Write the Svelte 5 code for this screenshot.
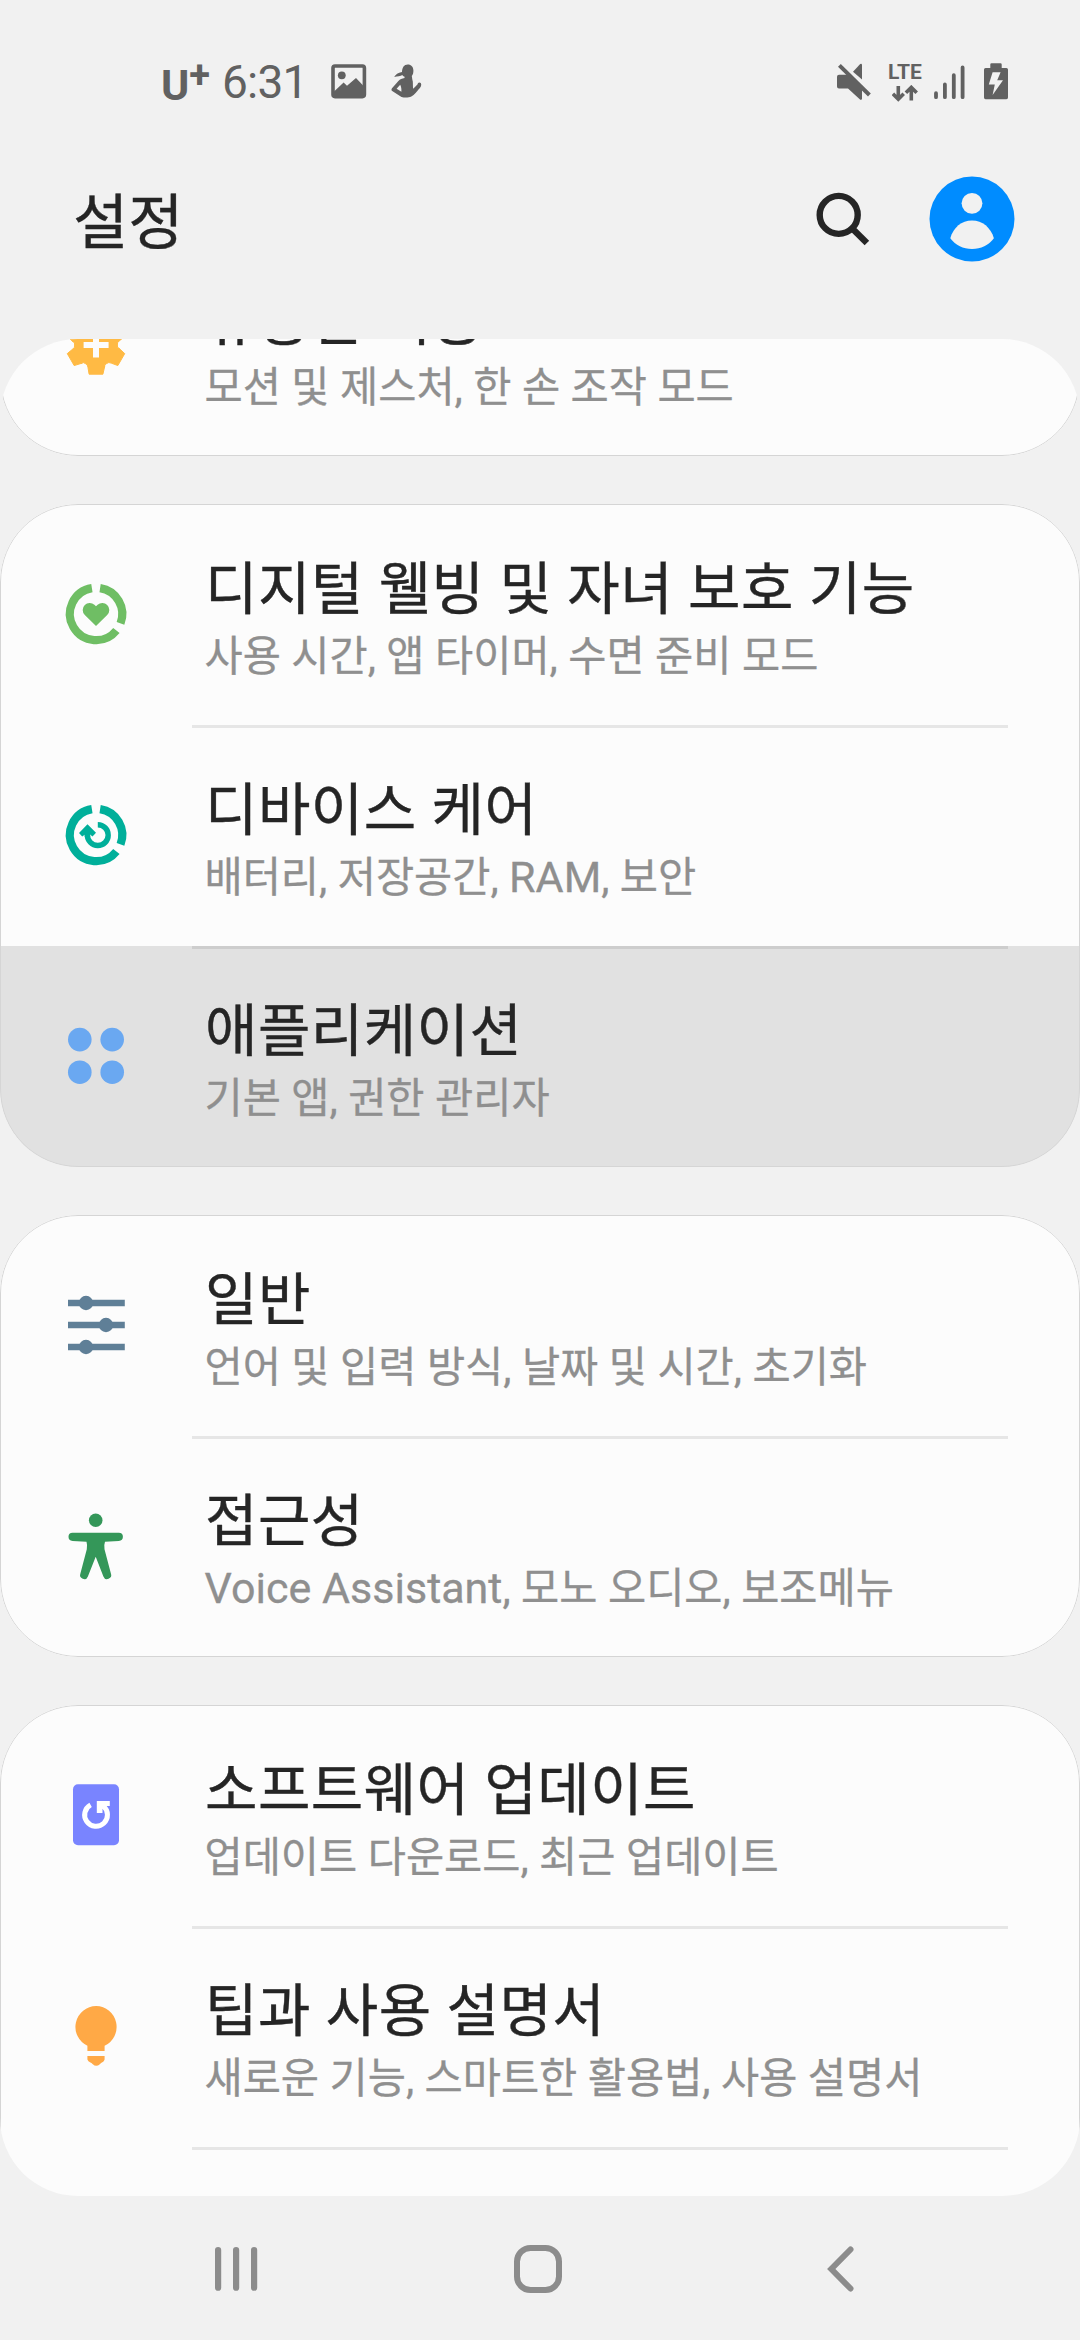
<script lang="ts">
	type Item = { icon: string; title: string; sub: string; pressed?: boolean };

	const groups: Item[][] = [
		[{ icon: 'gear', title: '유용한 기능', sub: '모션 및 제스처, 한 손 조작 모드' }],
		[
			{ icon: 'wellbeing', title: '디지털 웰빙 및 자녀 보호 기능', sub: '사용 시간, 앱 타이머, 수면 준비 모드' },
			{ icon: 'care', title: '디바이스 케어', sub: '배터리, 저장공간, RAM, 보안' },
			{ icon: 'apps', title: '애플리케이션', sub: '기본 앱, 권한 관리자', pressed: true }
		],
		[
			{ icon: 'general', title: '일반', sub: '언어 및 입력 방식, 날짜 및 시간, 초기화' },
			{ icon: 'access', title: '접근성', sub: 'Voice Assistant, 모노 오디오, 보조메뉴' }
		],
		[
			{ icon: 'update', title: '소프트웨어 업데이트', sub: '업데이트 다운로드, 최근 업데이트' },
			{ icon: 'tips', title: '팁과 사용 설명서', sub: '새로운 기능, 스마트한 활용법, 사용 설명서' },
			{ icon: '', title: '', sub: '' }
		]
	];

	// latin runs are set slightly larger than hangul
	const runs = (text: string) => text.split(/([A-Za-z]+(?: [A-Za-z]+)*)/).filter(Boolean);

	function polar(deg: number, r: number) {
		const a = (deg * Math.PI) / 180;
		return `${(36 + r * Math.cos(a)).toFixed(2)} ${(36 + r * Math.sin(a)).toFixed(2)}`;
	}

	// six teeth, slightly rounded valleys
	function gearPath() {
		let d = '';
		for (let i = 0; i < 6; i++) {
			const c = 90 + i * 60;
			d += `${i ? 'L' : 'M'}${polar(c - 23, 22.6)}L${polar(c - 13.3, 30)}L${polar(c + 13.3, 30)}L${polar(c + 20, 23.6)}Q${polar(c + 23, 21)} ${polar(c + 30, 21.4)}Q${polar(c + 37, 21)} ${polar(c + 40, 23.6)}`;
		}
		return d + 'Z';
	}
</script>

{#snippet itemIcon(name: string)}
	<svg class="item-icon" width="72" height="72" viewBox="0 0 72 72" fill="none">
		{#if name === 'gear'}
			<path d={gearPath()} fill="#ffba44" stroke="#ffba44" stroke-width="1" stroke-linejoin="round" />
			<path d="M36 23.4v25.2M23.6 36h25" stroke="#fcfcfc" stroke-width="6" />
		{:else if name === 'wellbeing'}
			<path d="M40.1 10.1A26.2 26.2 0 0 1 60.5 45.4M56.4 52.5A26.2 26.2 0 1 1 31.9 10.1" stroke="#6fbe64" stroke-width="8.2" />
			<path d="M36 48 24.8 37a7 7 0 0 1 0-10 6.9 6.9 0 0 1 9.6-.2L36 28.2l1.6-1.4a6.9 6.9 0 0 1 9.6.2 7 7 0 0 1 0 10Z" fill="#6fbe64" />
		{:else if name === 'care'}
			<path d="M40.1 10.1A26.2 26.2 0 0 1 60.5 45.4M56.4 52.5A26.2 26.2 0 1 1 31.9 10.1" stroke="#00af9a" stroke-width="8.2" />
			<path d="M37.8 25.7A10.4 10.4 0 1 1 27.4 36" stroke="#00af9a" stroke-width="5.4" />
			<path d="M27.5 25.3 19 34l3.2 3.6 2.5-1.8V38h5.4v-2.4l2.4 1.8 3.5-3.6Z" fill="#00af9a" />
		{:else if name === 'apps'}
			<g fill="#6aa8f1">
				<circle cx="19.8" cy="19.6" r="11.8" />
				<circle cx="52.2" cy="19.6" r="11.8" />
				<circle cx="19.8" cy="52.2" r="11.8" />
				<circle cx="52.2" cy="52.2" r="11.8" />
			</g>
		{:else if name === 'general'}
			<path d="M8 14h56.8M8 36h56.8M8 58h56.8" stroke="#5f7f97" stroke-width="6.4" />
			<g fill="#5f7f97">
				<circle cx="26" cy="14" r="7.2" />
				<circle cx="46" cy="36" r="7.2" />
				<circle cx="26" cy="58" r="7.2" />
			</g>
		{:else if name === 'access'}
			<circle cx="35.7" cy="10.3" r="6.8" fill="#349759" />
			<path d="M12.6 22.7H58.8a4.1 4.1 0 0 1 0 8.2L45 31.8q-1.2 3.2-.5 7.4L50.9 63.6a4 4 0 0 1-7.5 2.8L35.7 46.7 27.9 66.4a4 4 0 0 1-7.5-2.8L26.8 39.2q.7-4.2-.3-7.4L12.6 30.9a4.1 4.1 0 0 1 0-8.2Z" fill="#349759" />
		{:else if name === 'update'}
			<rect x="13" y="5.3" width="46" height="61" rx="5" fill="#7984ff" />
			<path d="M30.6 25.9A11.4 11.4 0 1 0 43.4 27.2" stroke="#fff" stroke-width="5" />
			<path d="M36.8 22h13v5H46l-3.5 3v4h-5.7Z" fill="#fff" />
		{:else if name === 'tips'}
			<path d="M36.2 6a20.9 20.9 0 0 1 8.4 39.8V51H27.4v-5.2A20.9 20.9 0 0 1 36.2 6ZM27.4 56h17.2v3.6q-.4 2.2-2.6 2.8-.8.2-2.2 1.8-3.6 3-7 0-1.4-1.6-2.4-1.8-2.4-.6-3-2.8Z" fill="#ffa946" />
		{/if}
	</svg>
{/snippet}

<div class="screen">
	<div class="status">
		<div class="carrier"><span>U</span><span class="plus">+</span></div>
		<span class="clock">6:31</span>
		<svg class="gallery" width="36" height="38" viewBox="0 0 36 38" fill="#616161">
			<rect x="2" y="3" width="31.4" height="30.6" rx="2" fill="none" stroke="#616161" stroke-width="3.6" />
			<circle cx="10.8" cy="12.3" r="3.9" />
			<path d="M2 29.5 12.6 19.4l3.4 3.4 9-7.8 9 9.4V34H2Z" />
		</svg>
		<svg width="32" height="38" viewBox="0 0 32 38" fill="#616161">
			<path d="M16.8 1.6c3.4 0 5.6 2.5 5.6 6 0 2.2-.3 4-1.6 5.4.3 1.4.3 3 1 5.6.2 2.4 0 5.3.4 7.1 1.6-1.4 3-2.8 4.4-4.4.2-1.2.8-1.9 1.6-1.9 1.6 0 2.4 1.2 1.9 3-.2 1.4-1 2.4-2.2 3.6-2 2.8-4.3 5.6-7.6 7.6-2.8 1.3-7 1.2-9.8.4L1.2 28c-1-.8-.9-1.6-.2-2.8L7.4 18c1.8-2 3.4-2.3 6.2-3l-.2-1.6c-1 .2-1.7-.6-2-1.3-2 1-5 1.4-8.2 2 1.6-2.4 3.6-4.4 7.8-5 .2-4.4 2-7.5 5.8-7.5ZM9.2 21.8l-3.6 4 4.8 3c.2-2.6-.2-4.9-1.2-7Z" />
		</svg>

		<div class="status-right">
			<svg width="35" height="38" viewBox="0 0 35 38" fill="#616161">
				<path d="M16 8.8 23.2 1q1.6-1 1.8 1v14.6Z" />
				<path d="M2 11.8h9.6L25 25.4v10.4q-.4 1.8-2 .8L11 25.4H2q-2-.2-2-2v-9.6q0-1.8 2-2Z" />
				<path d="M2.4 2.4 32.4 32" stroke="#616161" stroke-width="4" />
			</svg>
			<div class="lte">
				<span>LTE</span>
				<svg width="26" height="17" viewBox="0 0 26 17" fill="none" stroke="#616161" stroke-width="3.6">
					<path d="M6.3 1v13M.9 8.8l5.4 5.4 5.4-5.4M19.3 15.5v-13M13.9 7.8l5.4-5.4 5.4 5.4" />
				</svg>
			</div>
			<svg class="signal" width="32" height="38" viewBox="0 0 32 38" stroke="#616161" stroke-width="3.8" stroke-linecap="round">
				<path d="M2 30.2v4M10.9 21.4v12.8M19.8 12.2v22M28.6 4.4v29.8" />
			</svg>
			<svg width="24" height="38" viewBox="0 0 24 38">
				<path d="M6.3 1.4q0-1.2 1.2-1.2h9q1.2 0 1.2 1.2V5h4.7Q24 5 24 6.6v28q0 1.6-1.6 1.6H1.6Q0 36.2 0 34.6v-28Q0 5 1.6 5h4.7Z" fill="#616161" />
				<path d="M8.6 9.2h8l-3.4 8h5.8L8.6 32l2.2-10.6H4.8Z" fill="#f1f1f1" />
			</svg>
		</div>
	</div>

	<header class="header">
		<h1>설정</h1>
		<svg width="56" height="56" viewBox="0 0 56 56" fill="none" stroke="#252525" stroke-width="6.4">
			<circle cx="24.7" cy="23.9" r="19" />
			<path d="m38 37.2 14.9 14.9" />
		</svg>
		<svg class="avatar" width="86" height="86" viewBox="0 0 86 86" fill="#f1f1f1">
			<circle cx="43" cy="43" r="42.5" fill="#008cff" />
			<circle cx="43" cy="27.3" r="10.4" />
			<path d="M21.3 62.2C24.3 51.5 32.5 44.5 43 44.5S61.7 51.5 64.9 62.2C59.5 69.2 52 73 43 73S26.7 69.2 21.3 62.2Z" />
		</svg>
	</header>

	<main class="list">
		{#each groups as group}
			<section class="card">
				{#each group as item}
					<div class="row" class:pressed={item.pressed}>
						{@render itemIcon(item.icon)}
						<div class="body">
							<div class="title">{item.title}</div>
							<div class="sub">{#each runs(item.sub) as run}<span class:latin={/[A-Za-z]/.test(run)}>{run}</span>{/each}</div>
						</div>
					</div>
				{/each}
			</section>
		{/each}
	</main>

	<nav class="nav">
		<svg width="44" height="50" viewBox="0 0 44 50" stroke="#8c8c8c" stroke-width="6.2" stroke-linecap="round">
			<path d="M4.1 7.1v37.6M22.1 7.1v37.6M40.1 7.1v37.6" />
		</svg>
		<svg width="50" height="50" viewBox="0 0 50 50" fill="none" stroke="#8c8c8c" stroke-width="6">
			<rect x="4" y="5" width="42" height="42" rx="13.5" />
		</svg>
		<svg width="30" height="50" viewBox="0 0 30 50" fill="none" stroke="#8c8c8c" stroke-width="6" stroke-linecap="round">
			<path d="M25.5 6.5 6.3 26l19.2 19.5" />
		</svg>
	</nav>
</div>

<style>
	:global(body) {
		margin: 0;
		background: #f1f1f1;
	}
	.screen {
		width: 1080px;
		height: 2340px;
		display: flex;
		flex-direction: column;
		overflow: hidden;
		background: #f1f1f1;
		font-family: Roboto, 'Noto Sans CJK KR', sans-serif;
		color: #252525;
	}
	svg {
		display: block;
		flex-shrink: 0;
	}

	.status {
		height: 164px;
		display: flex;
		align-items: center;
		padding: 0 72px 0 161px;
		box-sizing: border-box;
		color: #616161;
	}
	.carrier {
		display: flex;
		width: 61px;
		font-size: 43px;
		font-weight: 700;
		line-height: 50px;
		padding-top: 5px;
	}
	.carrier .plus {
		font-size: 38px;
		line-height: 30px;
	}
	.clock {
		width: 109px;
		font-size: 46px;
		line-height: 54px;
		letter-spacing: -0.8px;
	}
	.gallery { margin-right: 24px; }
	.status-right {
		display: flex;
		align-items: center;
		margin-left: auto;
	}
	.lte {
		width: 36px;
		height: 38px;
		margin-left: 15px;
		display: flex;
		flex-direction: column;
		align-items: center;
		gap: 4px;
		font-size: 21px;
		font-weight: 700;
		line-height: 18px;
	}
	.signal { margin: 0 18px 0 11px; }

	.header {
		height: 110px;
		margin-bottom: 65px;
		padding: 0 65px 0 73px;
		display: flex;
		align-items: center;
		flex-shrink: 0;
	}
	.header h1 {
		margin: 0 auto 0 0;
		padding-top: 10px;
		font-size: 60px;
		font-weight: 400;
		line-height: 80px;
		-webkit-text-stroke: 0.4px;
	}
	.avatar { margin-left: 59px; }

	.list {
		height: 1857px;
		flex-shrink: 0;
		display: flex;
		flex-direction: column;
		gap: 48px;
		overflow: hidden;
		border-radius: 78px;
	}
	.card {
		flex-shrink: 0;
		overflow: hidden;
		border-radius: 78px;
		background: #fcfcfc;
		position: relative;
	}
	/* scrolled part of the list */
	.card:first-child { margin-top: -104px; }
	.card::after {
		content: '';
		position: absolute;
		inset: 0;
		border: 1px solid #d5d5d5;
		border-radius: 78px;
		pointer-events: none;
	}
	.row {
		height: 221px;
		display: flex;
		padding: 0 72px 0 60px;
		box-sizing: border-box;
	}
	.row.pressed { background: #e1e1e1; }
	.item-icon { margin-top: 74px; }
	.body {
		flex: 1;
		margin-left: 60px;
		padding: 45px 0 0 13px;
		border-top: 3px solid transparent;
		white-space: nowrap;
	}
	.row + .row .body { border-top-color: #e6e6e6; }
	.row.pressed .body { border-top-color: #cdcdcd !important; }
	.title {
		font-size: 57px;
		line-height: 76px;
		letter-spacing: 0.45px;
		word-spacing: 0.4px;
		-webkit-text-stroke: 0.4px;
	}
	.sub {
		margin: 1px 0 0 -0.5px;
		font-size: 41.5px;
		line-height: 56px;
		word-spacing: 0.2px;
		color: #8f8f8f;
		-webkit-text-stroke: 0.3px;
	}
	.latin { font-size: 43px; line-height: 1; }

	.nav {
		flex: 1;
		display: grid;
		grid-template-columns: repeat(3, 302px);
		align-items: center;
		justify-items: center;
		padding-left: 85px;
	}
</style>
